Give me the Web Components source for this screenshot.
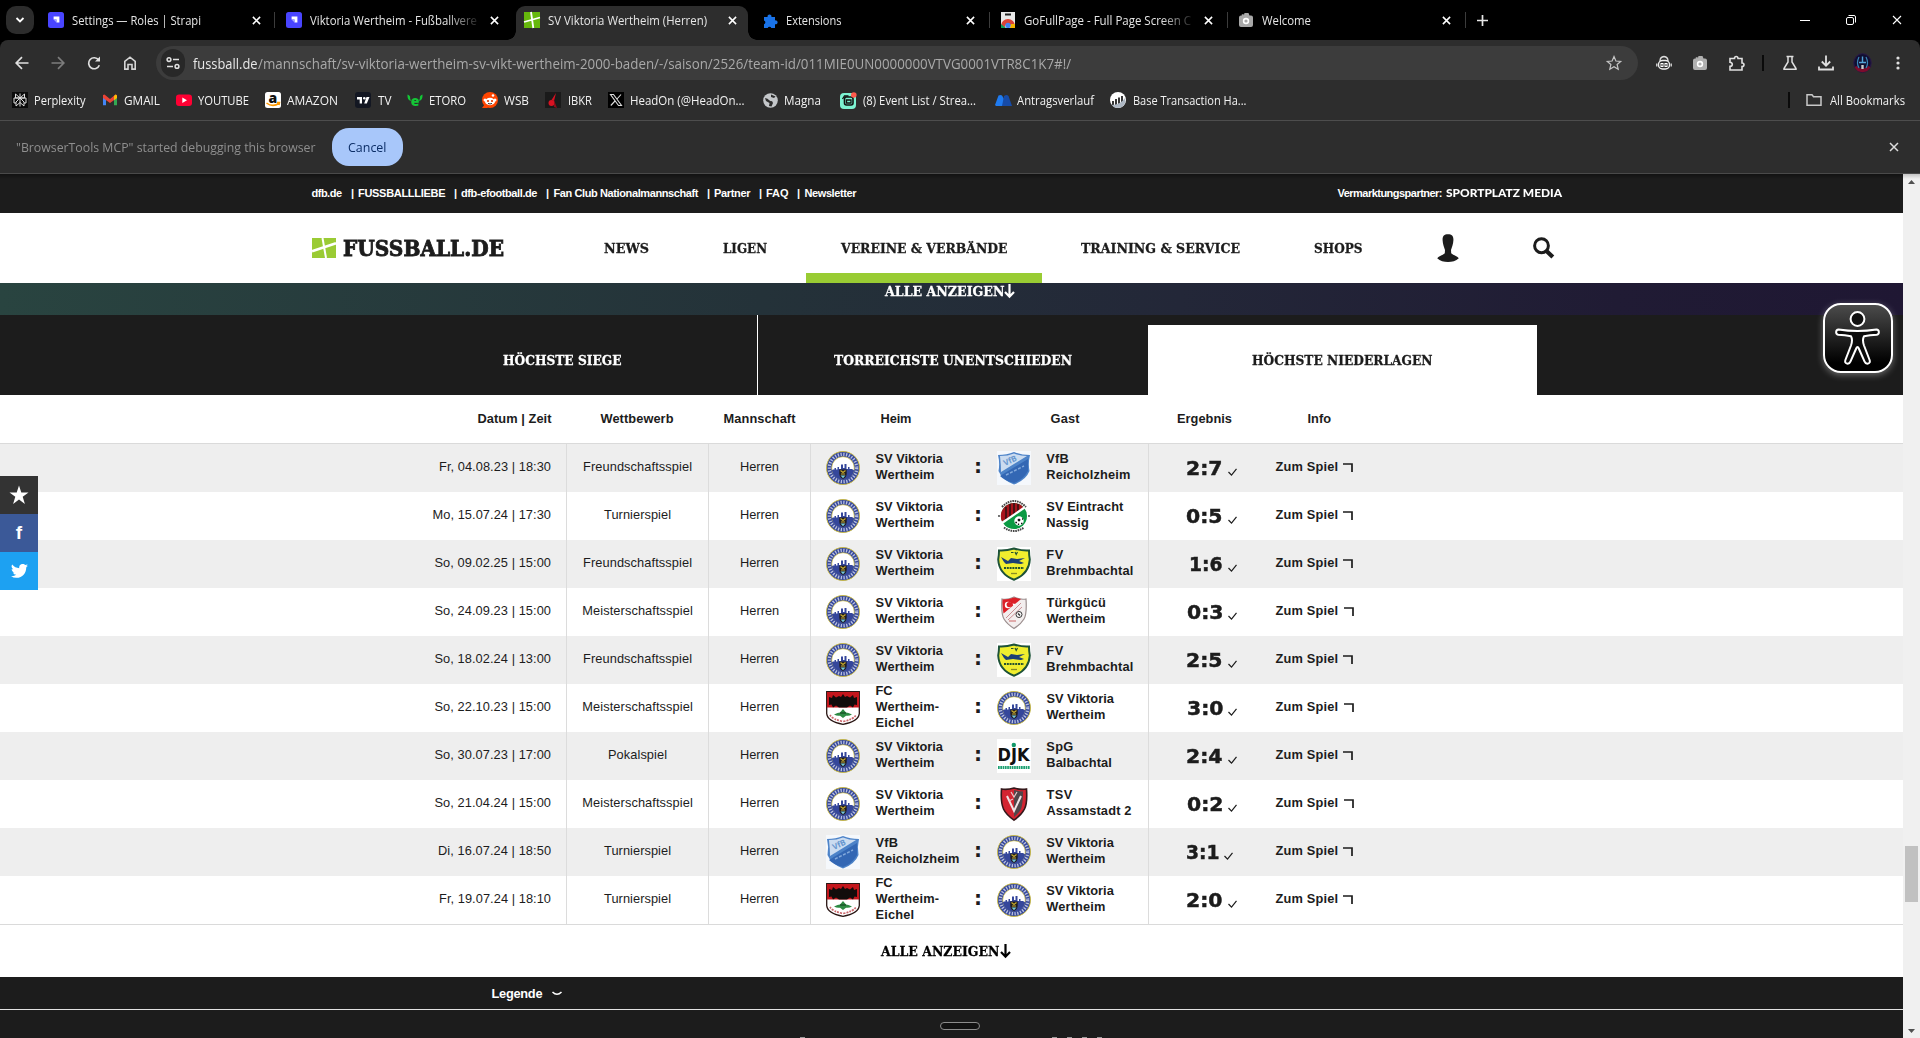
<!DOCTYPE html>
<html lang="de"><head><meta charset="utf-8"><title>SV Viktoria Wertheim (Herren)</title>
<style>html,body{margin:0;height:1038px;overflow:hidden;background:#fff}</style></head>
<body><browser-window></browser-window>
<script>
// Builds a flex row whose children start at given x offsets: [x, width, html]
const track = (items, x0 = 0) => {
  let c = x0, out = '';
  for (const [x, w, h] of items) { out += `<div class="it" style="margin-left:${(x - c).toFixed(1)}px;width:${w}px">${h}</div>`; c = x + w; }
  return out;
};
const T = (w, s, cls = '', ls = '') => `<fit-text w="${w}" class="${cls}" ${ls}>${s}</fit-text>`;
const S = (w, h, body, vb) => `<svg width="${w}" height="${h}" viewBox="${vb || `0 0 ${w} ${h}`}" fill="none">${body}</svg>`;
const base = `:host,*{box-sizing:border-box}.tr{display:flex;align-items:center}.it{flex:none;display:flex;align-items:center}svg{display:block;flex:none;overflow:visible}`;
const UI = `font-family:"Open Sans","Noto Sans",sans-serif;`;
const SLAB = `font-family:"DejaVu Serif",serif;font-weight:700;-webkit-text-stroke:.3px currentColor;`;
const define = (name, html) => customElements.define(name, class extends HTMLElement {
  connectedCallback() { if (!this.shadowRoot) this.attachShadow({ mode: 'open' }).innerHTML = typeof html === 'function' ? html(this) : html; }
});

// Text squeezed or spaced to an exact width
customElements.define('fit-text', class extends HTMLElement {
  connectedCallback() {
    if (this.shadowRoot) return;
    const w = +this.getAttribute('w');
    this.attachShadow({ mode: 'open' }).innerHTML = `<style>:host{display:block;flex:none;width:${w}px;white-space:pre}span{display:inline-block;transform-origin:0 50%}</style><span><slot></slot></span>`;
    const s = this.shadowRoot.querySelector('span'), m = s.getBoundingClientRect().width, n = this.textContent.length;
    if (!m) return;
    if (this.hasAttribute('ls')) s.style.letterSpacing = ((w - m) / (n - 1)) + 'px';
    else s.style.transform = `scaleX(${w / m})`;
  }
});

const X = (c = '#fff', s = 9, sw = 1.7) => S(s, s, `<path d="M1 1 9 9M9 1 1 9" stroke="${c}" stroke-width="${sw}"/>`, '0 0 10 10');
const strapi = S(16, 16, `<rect width="16" height="16" rx="2.5" fill="#4945ff"/><path d="M5.6 4.6h5.8v5.8H8.5V7.5H5.6z" fill="#fff"/><path d="M5.6 7.5h2.9v2.9z" fill="#a5a3ff"/>`);
const fde = S(16, 16, `<rect width="16" height="16" fill="#66b80c"/><path d="M7 0 9.3 16M0 10 16 5.5" stroke="#fff" stroke-width="1.8"/>`);
const puzzle = S(14, 15, `<path d="M1 4h3.600a2 2 0 1 1 3.800 0H12v3.400a2 2 0 1 1 0 3.800V15H8.300a1.900 1.900 0 0 0-3.600 0H1v-3.800a2 2 0 0 0 0-3.800z" fill="#1a73e8"/>`);
const cam = (c, w = 16) => S(w, w, `<path d="M1 5.500q0-2 2-2h.8V2.300h2v1.200L6.500 1h4l1 2.500H13q2 0 2 2V13q0 2-2 2H3q-2 0-2-2z" fill="${c}"/><circle cx="8" cy="9" r="3.200" fill="#fff"/><circle cx="8" cy="9" r="1.600" fill="${c}"/>`, '0 0 16 16');
const gofull = S(16, 16, `<path d="M1 0h14v16H1z" fill="#e8e8e8"/><path d="M5 1.500h6v2H5z" fill="#222"/><path d="M1 14a7 7 0 0 1 14 0l-4 1a3 3 0 0 0-6 0z" fill="#db4437"/><path d="M1 12l5 4H1z" fill="#0f9d58"/><path d="M11 12h4v4h-5z" fill="#f4b400"/><circle cx="8" cy="13.400" r="2.600" fill="#4285f4"/>`);

define('tab-strip', `<style>:host{display:block;height:40px;background:#000;color:#e6e6e6;${UI}font-size:12px}${base}
.tr{height:40px}.it{height:40px}
.search{width:28px;height:28px;border-radius:10px;background:#2c2c2c;display:flex;align-items:center;justify-content:center}
.act{background:#2d2d2d;height:34px;margin-top:6px;width:232px;border-radius:9px 9px 0 0;padding-left:8px;display:flex;align-items:center;position:relative;flex:none}
.act>*{margin-top:-6px}
.act:before,.act:after{content:"";position:absolute;bottom:0;width:9px;height:9px;margin:0}
.act:before{left:-9px;background:radial-gradient(circle at 0 0,#000 8.500px,#2d2d2d 9px)}.act:after{right:-9px;background:radial-gradient(circle at 100% 0,#000 8.500px,#2d2d2d 9px)}
.sep{width:1px;height:16px;background:#3c3c3c}
.fade{-webkit-mask-image:linear-gradient(90deg,#000 82%,transparent 103%)}</style><div class="tr">${track([
[6, 28, `<div class="search">${S(10, 10, '<path d="M1.500 3 5 6.500 8.500 3" stroke="#fff" stroke-width="1.800"/>')}</div>`],
[48, 16, strapi], [72, 129, T(129, 'Settings — Roles | Strapi')], [251.500, 9, X()], [274, 1, '<i class="sep"></i>'],
[286, 16, strapi], [310, 167, T(167, 'Viktoria Wertheim - Fußballvere', 'fade')], [489.500, 9, X()],
[516, 232, `<div class="act">${fde}<div style="width:8px"></div>${T(159, 'SV Viktoria Wertheim (Herren)')}<div style="width:20.500px"></div>${X()}</div>`],
[763, 15, puzzle], [786, 55.500, T(55.500, 'Extensions')], [965.500, 9, X()], [989, 1, '<i class="sep"></i>'],
[1000, 16, gofull], [1024, 167, T(167, 'GoFullPage - Full Page Screen C', 'fade')], [1203.500, 9, X()], [1227, 1, '<i class="sep"></i>'],
[1238, 16, cam('#a8a8a8')], [1262, 49, T(49, 'Welcome')], [1441.500, 9, X()], [1465, 1, '<i class="sep"></i>'],
[1476.500, 11, S(11, 11, '<path d="M5.500 0v11M0 5.500h11" stroke="#e6e6e6" stroke-width="1.700"/>')],
[1800, 10, S(10, 10, '<path d="M0 5.500h10" stroke="#fff"/>')],
[1846, 10, S(10, 10, '<rect x=".5" y="2.500" width="7" height="7" rx="1.500" stroke="#fff"/><path d="M2.500.5H8A1.500 1.500 0 0 1 9.500 2v5.500" stroke="#fff"/>')],
[1892, 10, X('#fff', 10, 1.100)]])}</div>`);

define('address-bar', `<style>:host{display:block;height:46px;background:#2d2d2d;padding-top:6px;color:#e8e8e8;${UI}font-size:14px;border-radius:8px 8px 0 0}${base}
.tr{height:34px}.omni{width:1482px;height:34px;border-radius:17px;background:#3c3c3c;display:flex;align-items:center}
.site{width:24px;height:28px;border-radius:12px;background:#282828;display:flex;align-items:center;justify-content:center}.path{color:#a9a9a9}</style><div class="tr">${track([
[15, 14, S(14, 14, '<path d="M13.500 7H1.500M7 1.200 1.200 7 7 12.800" stroke="#e0e0e0" stroke-width="1.700"/>')],
[51, 14, S(14, 14, '<path d="M.5 7h12M7 1.200 12.800 7 7 12.800" stroke="#7c7c7c" stroke-width="1.700"/>')],
[87, 14, S(14, 14, '<path d="M12.300 9.200A5.500 5.500 0 1 1 11.600 4" stroke="#e0e0e0" stroke-width="1.700"/><path d="M8 5.500h5V.5z" fill="#e0e0e0"/>')],
[123, 14, S(14, 14, '<path d="M1.800 5.400 7 1.200l5.200 4.200v7.700H9V8.500H5v4.600H1.800z" stroke="#d5d5d5" stroke-width="1.600"/>')],
[156, 1482, `<div class="omni">${track([
 [161, 24, `<div class="site">${S(14, 14, '<g stroke="#e0e0e0" stroke-width="1.500"><circle cx="3" cy="3.600" r="1.900"/><path d="M7 3.600h6M1 10.400h6"/><circle cx="11" cy="10.400" r="1.900"/></g>')}</div>`],
 [193, 64.500, T(64.500, 'fussball.de')], [257.500, 813.100, T(813.100, '/mannschaft/sv-viktoria-wertheim-sv-vikt-wertheim-2000-baden/-/saison/2526/team-id/011MIE0UN0000000VTVG0001VTR8C1K7#!/', 'path')],
 [1606, 16, S(16, 16, '<path d="m8 1.600 1.900 4.400 4.800.4-3.600 3.100 1.100 4.700L8 11.700l-4.200 2.500 1.100-4.700L1.300 6.400 6.100 6z" stroke="#c5c5c5" stroke-width="1.200"/>')]], 156)}</div>`],
[1656, 16, S(16, 16, '<path d="M4 6q0-4 4-4.500Q12 2 12 6" stroke="#ddd" stroke-width="1.300"/><rect x="2.500" y="5.500" width="11" height="8.500" rx="4" stroke="#eee" stroke-width="1.400"/><path d="M.8 8.500v3M15.200 8.500v3" stroke="#eee" stroke-width="1.200"/><path d="M4.500 8h3v4h-3zM8.500 8h3v4h-3z" fill="#fff"/><path d="M6 9v2M10 9v2" stroke="#222"/>')],
[1692, 16, cam('#b0b0b0')],
[1728, 17, S(17, 17, '<path d="M2 3.500h4.500q0-2 1.700-2t1.800 2h4V8q2 0 2 1.700t-2 1.800V15H2v-3.600q2.300-.2 2.300-2T2 7.300z" stroke="#e0e0e0" stroke-width="1.600"/>')],
[1762, 2, '<i style="width:2px;height:16px;background:#0a0a0a"></i>'],
[1782, 16, S(16, 16, '<path d="M4.500 1.500h7M6 2v5L2 13.500v.8h12v-.8L10 7V2" stroke="#e0e0e0" stroke-width="1.500"/>')],
[1818, 16, S(16, 16, '<path d="M8 .5v10M3.800 6.500 8 10.700l4.200-4.200M1 11.500v3h14v-3" stroke="#e0e0e0" stroke-width="1.800"/>')],
[1853, 19, S(19, 20, '<ellipse cx="9.500" cy="10" rx="8.700" ry="9.300" fill="#101032" stroke="#2a1648"/><path d="M1.500 14a9 9.600 0 0 0 16 0l-2-1q-6 6-12 0z" fill="#7c0c2c"/><path d="M6 4q-3 6 0 11M13 4q3 6 0 11" stroke="#3c86b8" stroke-width="1.200"/><path d="M9.500 3.500v6M6 9.500h7" stroke="#53a4d8" stroke-width="1.400"/><path d="M8.300 12h2.400v4H8.300z" fill="#ccc"/>')],
[1896, 4, S(4, 16, '<g fill="#e0e0e0"><circle cx="2" cy="3" r="1.600"/><circle cx="2" cy="8" r="1.600"/><circle cx="2" cy="13" r="1.600"/></g>')]])}</div>`);

const bm = {
 perp: S(16, 16, '<rect width="16" height="16" fill="#0b0b0b"/><path d="M8 1.500v13M3.500 2l4.500 4 4.500-4v4h-9zM2 6h12v5h-2M2 6v5h2M4 14v-4l4-4 4 4v4l-4-3.500z" stroke="#ddd"/>'),
 gmail: S(16, 16, '<path d="M1 3.500v9.800h3V6z" fill="#4285f4"/><path d="M12 13.300h3V3.500L12 6z" fill="#34a853"/><path d="m1 3 1.500-.5L8 7l5.500-4.500L15 3v3L8 11 1 6z" fill="#ea4335"/><path d="m12 4 1.500-1.500L15 3.500V6l-3 2.200z" fill="#fbbc04"/>'),
 yt: S(16, 16, '<rect y="2.500" width="16" height="11.500" rx="3" fill="#ff0033"/><path d="m6.300 5.500 4.700 2.700-4.700 2.700z" fill="#fff"/>'),
 ama: S(16, 16, '<rect width="16" height="16" rx="2.500" fill="#fff"/><text x="3.600" y="10.500" font-family="Open Sans" font-weight="800" font-size="14" fill="#111">a</text><path d="M1.500 11q6 4.500 12.500.5M12 10.500h2.500L14 13" stroke="#f90" stroke-width="1.500"/>'),
 tv: S(16, 16, '<rect width="16" height="16" rx="3" fill="#131722"/><path d="M2 5h5v6.500H4.700V7.500H2zM11.500 5H14.500l-2.700 6.500H9.200z" fill="#fff"/><circle cx="9.300" cy="6.300" r="1.300" fill="#fff"/>'),
 etoro: S(16, 16, '<path d="M.5 2.500Q0 8 4 9L3 6q1-2-2.500-3.500zM15.500 2.500Q16 8 12 9l1-3q-1-2 2.500-3.500z" fill="#13c636"/><text x="3.700" y="14" font-family="Open Sans" font-weight="800" font-size="14" fill="#13c636">e</text>'),
 red: S(16, 16, '<circle cx="8" cy="8" r="8" fill="#ff4500"/><path d="M0 16 3 12l3 4z" fill="#ff4500"/><ellipse cx="8" cy="9.500" rx="5" ry="3.700" fill="#fff"/><circle cx="3" cy="8" r="1.500" fill="#fff"/><circle cx="13" cy="8" r="1.500" fill="#fff"/><circle cx="11" cy="3.500" r="1.300" fill="#fff"/><circle cx="6" cy="9" r="1.100" fill="#e03a00"/><circle cx="10" cy="9" r="1.100" fill="#e03a00"/><path d="M6 11.400q2 1.200 4 0" stroke="#333"/>'),
 ib: S(16, 16, '<rect width="16" height="16" fill="#1a1a1a"/><path d="M11 1 6.500 8l2.500 1z" fill="#d81222"/><circle cx="6.500" cy="11" r="3" fill="#d81222"/><path d="M9 8v7l3 1z" fill="#8c0d18"/>'),
 x: S(16, 16, '<rect width="16" height="16" fill="#000"/><path d="M2.500 2.500h3l8 11h-3zM13 2.500 9 7M7 9l-4.200 4.500" stroke="#ddd" stroke-width="1.100"/>'),
 globe: S(15, 15, '<circle cx="7.500" cy="7.500" r="7.300" fill="#c4c7ca"/><path d="M2 5q3 .5 4 2t3 1l1 2-1.500 3.500L6 13 6.500 10 3 8zM8 1.500 8 4l3 1 1.500-1.500z" fill="#2d2d2d"/>'),
 ev: S(17, 17, '<rect y="1" width="16" height="16" rx="4" fill="#7df3d2"/><rect x="4.500" y="5" width="8.500" height="8" rx="2" stroke="#111" stroke-width="1.600"/><path d="M6.500 8h4.500v3H6.500zM2.500 7l2-3h4" stroke="#111" stroke-width="1.300"/><circle cx="13.800" cy="3" r="2.800" fill="#ff5a4d"/>'),
 ant: S(17, 16, '<path d="M0 13 3.500 3.500q2-1.200 3.500 0L9 7v7H1z" fill="#1f7bf0"/><path d="m7 14 2-10q2.500-2 4.500 0L17 14z" fill="#164ba8"/>'),
 base: S(17, 16, '<circle cx="8" cy="8" r="8" fill="#fff"/><path d="M3 13.500V9M6 14.500V7M9 13V5.500M12 11V4" stroke="#222" stroke-width="1.800"/><path d="M2 13Q10 13 15 6q2 9-7 10-4 0-6-3z" fill="#aeb8c4"/>')};
define('bookmarks-bar', `<style>:host{display:block;height:35px;background:#2d2d2d;border-bottom:1px solid #4d4d4d;color:#f2f2f2;${UI}font-size:12px}${base}.tr{height:28px}</style><div class="tr">${track([
[12, 16, bm.perp], [34, 51.500, T(51.500, 'Perplexity')], [102, 16, bm.gmail], [124, 36, T(36, 'GMAIL')], [176, 16, bm.yt], [198, 51, T(51, 'YOUTUBE')], [265, 16, bm.ama], [287, 51, T(51, 'AMAZON')],
[355, 16, bm.tv], [377.500, 13.500, T(13.500, 'TV')], [407, 16, bm.etoro], [429, 37, T(37, 'ETORO')], [482, 16, bm.red], [504, 25, T(25, 'WSB')], [545, 16, bm.ib], [567.500, 24, T(24, 'IBKR')],
[608, 16, bm.x], [630, 114.500, T(114.500, 'HeadOn (@HeadOn...')], [763, 15, bm.globe], [784, 37, T(37, 'Magna')], [840, 17, bm.ev], [863, 113, T(113, '(8) Event List / Strea...')],
[995, 17, bm.ant], [1017, 77, T(77, 'Antragsverlauf')], [1110, 17, bm.base], [1132.500, 113.500, T(113.500, 'Base Transaction Ha...')],
[1788, 2, '<i style="width:2px;height:16px;background:#0a0a0a"></i>'], [1806, 16, S(16, 14, '<path d="M1 12.200V1.800h5l1.500 2H15v8.400z" stroke="#c8c8c8" stroke-width="1.500"/>')], [1830, 75, T(75, 'All Bookmarks')]])}</div>`);

define('debug-infobar', `<style>:host{display:block;height:53px;background:#2d2d2d;border-bottom:1px solid #4a4a4a;${UI}font-size:12px;color:#8f8f8f}${base}.tr{height:52px}
.b{width:71px;height:38px;border-radius:17px;background:#a8c7fa;color:#0b2d66;display:flex;align-items:center;justify-content:center}</style><div class="tr">${track([
[16, 299.500, T(299.500, '"BrowserTools MCP" started debugging this browser')], [332, 71, `<div class="b">${T(38.500, 'Cancel')}</div>`], [1889, 10, X('#ddd', 10, 1.500)]])}</div>`);

define('meta-bar', `<style>:host{display:block;height:39px;background:linear-gradient(#121212,#1c1c1c 5px);color:#fff;font:700 11px "Liberation Sans",Arial,sans-serif}${base}.tr{height:38px}.l{font:900 11px Lato,sans-serif;margin-top:-1px}</style><div class="tr">${track([
[311.500, 30.500, T(30.500, 'dfb.de', '', 'ls')], [351, 2, '|'], [358, 87.500, T(87.500, 'FUSSBALLLIEBE', '', 'ls')], [454, 2, '|'], [461, 76.500, T(76.500, 'dfb-efootball.de', '', 'ls')], [546, 2, '|'], [553.500, 145, T(145, 'Fan Club Nationalmannschaft', '', 'ls')],
[707, 2, '|'], [714, 36.500, T(36.500, 'Partner', '', 'ls')], [759, 2, '|'], [766, 22.500, T(22.500, 'FAQ', '', 'ls')], [797, 2, '|'], [804.500, 52, T(52, 'Newsletter', '', 'ls')],
[1337.500, 105, T(105, 'Vermarktungspartner:', '', 'ls')], [1446, 116, T(116, 'SPORTPLATZ MEDIA', 'l')]])}</div>`);

define('main-nav', `<style>:host{display:block;height:70px;background:#fff;color:#1c1c1c;${SLAB}font-size:13.500px}${base}.tr{height:70px}.it{height:70px}
.logo{font-size:22px;-webkit-text-stroke:.9px #1c1c1c}.act{width:236px;height:70px;border-bottom:10px solid #9c3;padding:10px 0 0 35px;display:flex;align-items:center}</style><div class="tr">${track([
[312, 24, S(24, 20, '<path d="M0 0h24v20H0z" fill="#9acb34"/><path d="M10.500 0 14 20" stroke="#fff" stroke-width="2"/><path d="M0 13.200 24 5.300" stroke="#fff" stroke-width="2.600"/>')], [343, 161, T(161, 'FUSSBALL.DE', 'logo')],
[604, 45, T(45, 'NEWS')], [722.500, 44, T(44, 'LIGEN')], [806, 236, `<div class="act">${T(166.500, 'VEREINE &amp; VERBÄNDE')}</div>`], [1081, 159, T(159, 'TRAINING &amp; SERVICE')], [1314, 48.500, T(48.500, 'SHOPS')],
[1437, 22, S(22, 28, '<path d="M11 .2c4 0 5.600 2 5.400 6-.2 4-1.400 6.800-2.400 9.800l.2 3.200c2 2 6.200 3 7.600 5C19 27 15 28 11 28S3 27 .2 24.200c1.400-2 5.600-3 7.600-5L8 16C7 13 5.800 10.200 5.600 6.200 5.400 2.200 7 .2 11 .2z" fill="#1c1c1c"/>')],
[1533, 22, S(22, 22, '<ellipse cx="8.500" cy="8.700" rx="6.900" ry="7" stroke="#1c1c1c" stroke-width="3"/><path d="m13 13.500 6.800 6.500" stroke="#1c1c1c" stroke-width="4.200"/>')]])}</div>`);

const down = c => S(11, 14, `<path d="M5.500 0v12.500M1 8l4.500 4.700L10 8" stroke="${c}" stroke-width="2.200"/>`);
define('more-strip', `<style>:host{display:block;height:32px;background:linear-gradient(90deg,#294440 0,#243239 40%,#232738 62%,#201b34 85%,#1f1733 100%);color:#fff;${SLAB}font-size:13.500px}${base}.tr{height:16px}</style><div class="tr">${track([[885, 119.500, T(119.500, 'ALLE ANZEIGEN')], [1004, 11, down('#fff')]])}</div>`);

define('stat-tabs', `<style>:host{display:flex;height:80px;padding-left:367px;background:#1c1c1c;color:#fff;${SLAB}font-size:13.500px}${base}
.t{width:391px;border-right:1px solid #fff;display:flex;align-items:center;justify-content:center;padding-top:10px}.t.n{border:0;width:390px}.t.a{background:#fff;color:#1c1c1c;width:389px;border:0;margin-top:10px;padding-top:0}</style>
<div class="t">${T(118.500, 'HÖCHSTE SIEGE')}</div><div class="t n">${T(238, 'TORREICHSTE UNENTSCHIEDEN')}</div><div class="t a">${T(180.500, 'HÖCHSTE NIEDERLAGEN')}</div>`);

const crest = {
 v: '<circle cx="17" cy="17" r="16.500" fill="#35479b" stroke="#c9b93c" stroke-width=".9"/><circle cx="17" cy="17" r="13.700" stroke="#f1f3fb" stroke-width="3.200" stroke-dasharray="1.300 1.500" opacity=".7"/><circle cx="17" cy="17" r="11.300" fill="#fff" stroke="#c9b93c" stroke-width=".7"/><path d="M5.800 19.500 7 18.500h1.500V17H10v1.500h1.500V16H13v2h2v-4l1-1 1 1v3h1.500v-4h2v5H22v-2h1.500v2H26l2.200 1.500A11.300 11.300 0 0 1 6 20z" fill="#35479b"/><path d="M13.300 18.500h7.400v4q0 4-3.700 5.500-3.700-1.500-3.700-5.500z" fill="#201d20"/><path d="m14.500 19.500 2.500 2 2.500-2M15 23h4" stroke="#c6aa2e" stroke-width="1.200"/><path d="M14.500 24.500h5L17 27.300z" fill="#74c7d8"/>',
 vfb: '<rect width="34" height="34" fill="#f5f8fc"/><path d="M1 4Q10 4 17 1q7 3 16 3-2 8-.5 16Q29 29 17 33.500 5 29 1.500 20 3 12 1 4z" fill="#4d83c8"/><path d="M3 5q8 0 14-2.500Q23 5 30 5L4 21Q4 14 3 5z" fill="#cbdcf0"/><path d="M3 25 31 8v12q-5 9-14 12Q8 30 3 25z" fill="#3367b4"/><text transform="translate(8 15) rotate(-25)" font-family="Open Sans" font-size="8" font-weight="700" fill="#6797cf">VfB</text><path d="m9 24 18-9" stroke="#82a9dc" stroke-dasharray="3 1.500" stroke-width="1.500"/>',
 nas: '<rect width="34" height="34" fill="#fff"/><path d="M5 8Q17-4 29 8" stroke="#444" stroke-width="2" stroke-dasharray="1.600 .8"/><path d="M7 28.500Q17 35.500 27 28.500" stroke="#444" stroke-width="2" stroke-dasharray="1.600 .8"/><circle cx="2" cy="17" r=".9" fill="#333"/><circle cx="32" cy="17" r=".9" fill="#333"/><circle cx="17" cy="17" r="13" fill="#0b9a43"/><path d="M5 22.500A13 13 0 0 1 27 9z" fill="#a8141c"/><path d="M9 8v12M13 5v13M17 4v11M21 5v8" stroke="#2a1012" stroke-width="1.500"/><path d="M5 24 27.500 8.500" stroke="#fff" stroke-width="2.200"/><circle cx="22" cy="22" r="4.700" fill="#fff"/><path d="m20.500 20.500 1.500-1 1.500 1-.5 1.800h-2z" fill="#111"/><path d="M18.300 23.500h1.700M24 24.500h1.500M21.500 26v-1.500M25 20h1" stroke="#111" stroke-width="1.300"/>',
 bre: '<rect width="34" height="34" fill="#fff"/><path d="M2 3.500q7 .5 15-2 8 2.500 15 2 0 5 .8 9Q32 27 17 32.700 2 27 1.200 12.500 2 8 2 3.500z" fill="#f0ee2e" stroke="#1d5238" stroke-width="2"/><path d="M4 10l7 4 3-3 6 1 8-1-6 3 5 2-3 1-8-1-7 1-2-2z" fill="#1c3f74"/><path d="M14 5.500h2.500M18 5l1.200 2.500L20.500 5" stroke="#24522f" stroke-width="1.200"/><path d="M7 21h20" stroke="#24522f" stroke-width="1.800" stroke-dasharray="2 .8"/><path d="M14 26.500h6" stroke="#888c22" stroke-width="1.300"/>',
 tur: '<rect width="34" height="34" fill="#fff"/><path d="M5 4q6 1 12-2 6 3 12 2 1 15-2 20-3 5-10 9.500Q10 29 7 24 4 19 5 4z" fill="#f3eeee" stroke="#9a8d8d" stroke-width="1.200"/><path d="M5.500 4.500Q12 4.500 17 2.500L24 4 6.500 18.500Q5 11 5.500 4.500z" fill="#dc1f27"/><circle cx="11" cy="10" r="3.200" fill="#fff"/><circle cx="12.200" cy="9.600" r="2.600" fill="#dc1f27"/><path d="m15.500 8.500 3 .5-2 2z" fill="#fff"/><path d="M9 23 24 8M11 25l14-13" stroke="#c98f93"/><circle cx="22" cy="19.500" r="3" fill="#fff" stroke="#333"/><path d="m21 18.500 2 2" stroke="#333" stroke-width="1.500"/><path d="M12 26h7" stroke="#c66"/>',
 eic: '<path d="M.7.7h32.600v22q-1 8-16.300 10.600Q1.700 30.700.7 22.700z" fill="#fff" stroke="#2a1614" stroke-width="1.300"/><path d="M1 1h32v15.500H1z" fill="#c4161c"/><path d="m3 6 3 1 1-3 3 2.500L13 5l2 1 2-3 2 3 2-1 3 1.500L27 4l1 3 3-1v8l-2.500-.5-1.500 3-3-2-3 2h-8l-3-2-3 2-1.500-3L3 14z" fill="#120c0b"/><path d="M8 23.500q4-2 6-2l3-3.500 3 3.500q2 0 6 2-3 1.800-6 1.200l-3 2.300-3-2.300q-3 .6-6-1.200z" fill="#2d8a43"/><path d="M14 22h6" stroke="#113d1c"/><path d="M4 24q2.500 4.500 13 6.500 10.500-2 13-6.500" stroke="#c9656a" stroke-width="1.700" stroke-dasharray="2 1"/>',
 djk: '<rect width="34" height="34" fill="#fff"/><text x=".5" y="22" font-family="DejaVu Sans" font-size="18" font-weight="700" fill="#111" textLength="32" lengthAdjust="spacingAndGlyphs">DJK</text><circle cx="16.800" cy="6" r="2.200" fill="#12996a"/><path d="M1 28.500h32" stroke="#1ba071" stroke-width="2.800" stroke-dasharray="1.700 .6"/>',
 tsv: '<rect width="34" height="34" fill="#fff"/><path d="M4.500 2q6 1 12.500-1 6 2 12.500 1 1 14-2 20-3 6-10.500 11.200Q9 27.500 6.500 22 3.500 15 4.500 2z" fill="#d32431" stroke="#34181b" stroke-width="1.600"/><path d="M17 3q5 1.500 9 1.500 0 12-2 17.500-2 4-7 8z" fill="#50464a"/><path d="m10 9 7 15 7-15" stroke="#efe3e5" stroke-width="2"/><path d="m14 5 3 5 3-5M12 14l4-2" stroke="#e8c9cc" stroke-width="1.200"/>'
};
define('club-crest', el => `<style>:host{display:block;width:34px;height:34px}svg{display:block;overflow:visible}</style>${S(34, 34, crest[el.getAttribute('club')])}`);
const club = {
 v: [['SV Viktoria', 67.500], ['Wertheim', 59]], vfb: [['VfB', 22.500], ['Reicholzheim', 84]], nas: [['SV Eintracht', 77], ['Nassig', 42.500]], bre: [['FV', 17], ['Brehmbachtal', 87]],
 tur: [['Türkgücü', 59.500], ['Wertheim', 59]], eic: [['FC', 17], ['Wertheim-', 63.500], ['Eichel', 38.500]], djk: [['SpG', 27], ['Balbachtal', 65.500]], tsv: [['TSV', 26], ['Assamstadt 2', 85]]
};
const names = k => `<div class="nm">${club[k].map(([t, w]) => T(w, t, 'b', 'ls')).join('')}</div>`;
define('match-row', el => {
  const [d, dw, c, cw, h, g, r] = el.getAttribute('data').split(';');
  const rx = r === '1:6' ? 1189.500 : 1186.500, rw = r === '3:1' ? 33.500 : r === '1:6' ? 33.500 : 36.500, cx = r === '3:1' ? 1224.500 : 1228;
  return `<style>:host{display:block;height:48px;color:#1c1c1c;font:12.800px/16px "Liberation Sans",Arial,sans-serif}${base}
.tr,.it{height:48px}.s{background:#dcdcdc;height:48px;width:1px}.b{font-weight:700}.it>.p,.it>.b{margin-top:-1.500px}.nm{display:block;padding-bottom:2px}.c{font:700 20px/20px "DejaVu Sans",sans-serif;margin-top:-4px}.r{font:700 20px/20px "DejaVu Sans",sans-serif;-webkit-text-stroke:.5px #1c1c1c}</style><div class="tr">${track([
  [551 - dw, +dw, T(dw, d, 'p', 'ls')], [566, 1, '<i class="s"></i>'], [637.500 - cw / 2, +cw, T(cw, c, 'p', 'ls')], [708, 1, '<i class="s"></i>'], [740, 39, T(39, 'Herren', 'p', 'ls')], [810, 1, '<i class="s"></i>'],
  [826, 34, `<club-crest club="${h}"></club-crest>`], [875.500, 90, names(h)], [974, 8, '<div class="c">:</div>'], [997, 34, `<club-crest club="${g}"></club-crest>`], [1046.300, 95, names(g)], [1148, 1, '<i class="s"></i>'],
  [rx, rw, T(rw, r, 'r')], [cx, 9, `<div style="padding-top:7px">${S(9, 8, '<path d="m.5 4 3 3.200L8.500.8" stroke="#1c1c1c" stroke-width="1.200"/>')}</div>`],
  [1275.500, 62.500, T(62.500, 'Zum Spiel', 'b', 'ls')], [1343.500, 10, `<div style="padding-bottom:1px">${S(10, 9, '<path d="M0 1h9v8" stroke="#1c1c1c" stroke-width="1.700"/>')}</div>`]])}</div>`;
});
define('match-head', `<style>:host{display:block;height:49px;border-bottom:1px solid #dadada;color:#1c1c1c;font:700 12.800px "Liberation Sans",Arial,sans-serif}${base}.tr{height:47px}</style><div class="tr">${track([
[477.500, 74, T(74, 'Datum | Zeit', '', 'ls')], [600.500, 73, T(73, 'Wettbewerb', '', 'ls')], [723.500, 72, T(72, 'Mannschaft', '', 'ls')], [880.500, 31, T(31, 'Heim', '', 'ls')], [1050.500, 29, T(29, 'Gast', '', 'ls')], [1177, 55, T(55, 'Ergebnis', '', 'ls')], [1307.500, 23.500, T(23.500, 'Info', '', 'ls')]])}</div>`);
const F = 'Freundschaftsspiel;109', M = 'Meisterschaftsspiel;110.500', U = 'Turnierspiel;67';
const rows = [`Fr, 04.08.23 | 18:30;112;${F};v;vfb;2:7`, `Mo, 15.07.24 | 17:30;118.500;${U};v;nas;0:5`, `So, 09.02.25 | 15:00;116.500;${F};v;bre;1:6`, `So, 24.09.23 | 15:00;116.500;${M};v;tur;0:3`, `So, 18.02.24 | 13:00;116.500;${F};v;bre;2:5`,
 `So, 22.10.23 | 15:00;116.500;${M};eic;v;3:0`, `So, 30.07.23 | 17:00;116.500;Pokalspiel;59;v;djk;2:4`, `So, 21.04.24 | 15:00;116.500;${M};v;tsv;0:2`, `Di, 16.07.24 | 18:50;113;${U};vfb;v;3:1`, `Fr, 19.07.24 | 18:10;112;${U};eic;v;2:0`];
define('match-table', `<style>:host{display:block;background:#fff;border-bottom:1px solid #dadada}match-row:nth-of-type(odd){background:#eee}</style><match-head></match-head>${rows.map(r => `<match-row data="${r}"></match-row>`).join('')}`);

define('table-footer', `<style>:host{display:block;color:#000;${SLAB}font-size:13.500px}${base}.more{height:52px;background:#fff}
.leg{height:33px;background:#1c1c1c;border-bottom:1px solid #e2e2e2;color:#fff;font:700 12.800px "Liberation Sans",Arial,sans-serif;-webkit-text-stroke:0}.end{height:28px;background:#1c1c1c;display:flex;flex-direction:column;align-items:flex-start;padding-top:12px}
.pill{margin-left:940px;width:40px;height:8px;border:1px solid #8b8b8b;border-radius:4px;background:#111;flex:none}.dots{padding-top:7px}.dots i{width:5px;height:1px;background:#999}</style>
<div class="tr more">${track([[881, 118.500, T(118.500, 'ALLE ANZEIGEN')], [1000, 11, down('#000')]])}</div>
<div class="tr leg">${track([[491.500, 51, T(51, 'Legende', '', 'ls')], [552, 10, S(10, 5, '<path d="M.5 1q4.500 4.500 9 0" stroke="#fff" stroke-width="1.500"/>')]])}</div>
<div class="end"><div class="pill"></div><div class="tr dots">${track([800, 1052, 1067, 1082, 1097].map(x => [x, 5, '<i></i>']))}</div></div>`);

define('social-bar', `<style>:host{display:flex;flex-direction:column;width:38px}div{height:38px;display:flex;align-items:center;justify-content:center}.f{font:700 19px "Liberation Sans",sans-serif;color:#fff}</style>
<div style="background:#333">${S(20, 20, '<path d="m10 .5 2.300 7h7.200l-5.800 4.300 2.200 7.200L10 14.600 4.100 19l2.200-7.200L.5 7.500h7.200z" fill="#fff"/>')}</div>
<div class="f" style="background:#3b5998">f</div>
<div style="background:#1da1f2">${S(17, 14, '<path d="M5.300 13.800c6.400 0 9.900-5.300 9.900-9.900v-.5A7 7 0 0 0 17 1.600a7 7 0 0 1-2 .6A3.500 3.500 0 0 0 16.500.2a7 7 0 0 1-2.200.9 3.500 3.500 0 0 0-6 3.200A9.900 9.900 0 0 1 1.200.6a3.500 3.500 0 0 0 1.100 4.700 3.500 3.500 0 0 1-1.600-.4 3.500 3.500 0 0 0 2.800 3.400 3.500 3.500 0 0 1-1.600.1 3.500 3.500 0 0 0 3.300 2.400A7 7 0 0 1 0 12.200a9.900 9.900 0 0 0 5.300 1.600" fill="#fff"/>')}</div>`);

define('access-button', `<style>:host{display:block;width:70px;height:70px;border:2px solid #fff;border-radius:18px;background:linear-gradient(#4b4b4b,#000 88%);box-shadow:0 2px 7px rgba(255,255,255,.35)}svg{display:block;margin:4px 0 0 10px}</style>
${S(46, 58, '<g stroke="#fff" stroke-width="2"><circle cx="22.500" cy="10" r="6.900" fill="#111"/><path d="M3.500 20.500Q22.500 23.500 41.500 20.500a2.700 2.700 0 0 1 .3 5.300q-7 .4-12.800 1.500-2 3.500 0 9.200l5.600 14.500q.9 3-1.600 3.600-2.400.4-3.400-2L23.800 39.500q-1.300-3-2.600 0L15.400 52.600q-1 2.400-3.400 2-2.500-.6-1.600-3.600L16 36.500q2-5.700 0-9.200-5.800-1.100-12.800-1.500a2.700 2.700 0 0 1 .3-5.300z" fill="#0c0c0c"/></g>')}`);

define('page-scrollbar', `<style>:host{display:flex;flex-direction:column;align-items:center;width:17px;height:864px;background:linear-gradient(#c4c4c4,#f0f0f0 5px);padding:6px 0 5px}svg{display:block;flex:none}.th{width:13px;height:56px;margin:662px 1px auto 0;background:#c1c1c1;flex:none}</style>
${S(7, 4, '<path d="M0 4 3.500 0 7 4z" fill="#505050"/>')}<div class="th"></div>${S(7, 4, '<path d="M0 0h7L3.500 4z" fill="#505050"/>')}`);

define('browser-window', `<style>:host{display:block;width:1920px;height:1038px;overflow:hidden}.view{display:flex;position:relative}.page{width:1903px;flex:none}social-bar{position:absolute;left:0;top:302px}access-button{position:absolute;left:1823px;top:129px;box-sizing:border-box}page-scrollbar{box-sizing:border-box}.top{background:#000}</style>
<tab-strip></tab-strip><div class="top"><address-bar></address-bar></div><bookmarks-bar></bookmarks-bar><debug-infobar></debug-infobar>
<div class="view"><div class="page"><meta-bar></meta-bar><main-nav></main-nav><more-strip></more-strip><stat-tabs></stat-tabs><match-table></match-table><table-footer></table-footer></div><page-scrollbar></page-scrollbar><social-bar></social-bar><access-button></access-button></div>`);
</script></body></html>
